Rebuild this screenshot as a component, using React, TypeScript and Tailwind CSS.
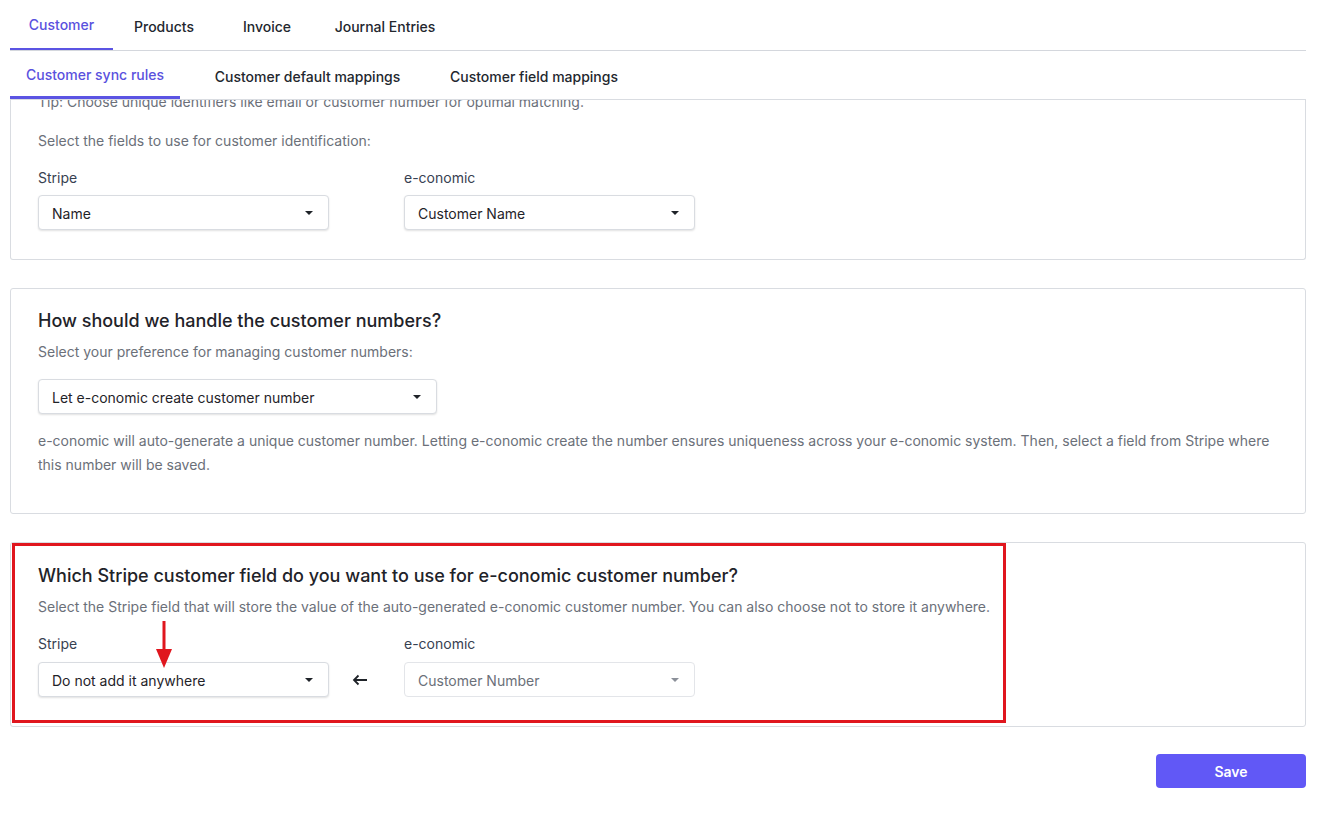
import React from "react";

const Caret = ({ light }: { light?: boolean }) => (
  <svg width="8" height="4" viewBox="0 0 8 4">
    <path d="M0 0h8L4 4z" fill={light ? "#8b9099" : "#1f2329"} />
  </svg>
);

function Select({ value, w, disabled }: { value: string; w: string; disabled?: boolean }) {
  return (
    <div
      className={
        "flex h-[35px] items-center justify-between rounded-[4px] border pl-[13px] pr-[15px] text-[14px] " +
        w +
        (disabled
          ? " border-[#e3e5e9] bg-white text-[#6b7079]"
          : " border-[#d9dce1] bg-white text-[#1f2329] shadow-[0_1px_2px_rgba(0,0,0,0.12)]")
      }
    >
      <span className="pt-[1px]">{value}</span>
      <Caret light={disabled} />
    </div>
  );
}

function LeftArrow() {
  return (
    <svg width="16" height="12" viewBox="0 0 16 12">
      <path d="M15 6H2M6.5 1.5L2 6l4.5 4.5" stroke="#1f2329" strokeWidth="1.8" fill="none" />
    </svg>
  );
}

export default function App() {
  return (
    <div className="min-h-screen w-full bg-white pl-[10px] pr-[24px] text-[#1f2329]" style={{ fontFamily: "Inter, 'Noto Sans', sans-serif" }}>
      {/* Top tabs */}
      <div className="flex h-[51px] border-b border-[#d4d7dd] text-[14px] font-medium">
        <div className="flex w-[103px] items-center justify-center pb-[2px] text-[#5a51de] shadow-[inset_0_-2px_0_#5b54e3]">Customer</div>
        <div className="flex w-[102px] items-center justify-center pt-[2px] text-[#23272e]">Products</div>
        <div className="flex w-[104px] items-center justify-center pt-[2px] text-[#23272e]">Invoice</div>
        <div className="flex w-[132px] items-center justify-center pt-[2px] text-[#23272e]">Journal Entries</div>
      </div>

      {/* Sub tabs */}
      <div className="flex h-[49px] border-b border-[#d9dce1] text-[14px] font-medium">
        <div className="flex w-[170px] items-center justify-center pb-[1px] text-[#5a51de] shadow-[inset_0_-3px_0_#5b54e3]">Customer sync rules</div>
        <div className="flex w-[255px] items-center justify-center pt-[2px] text-[#23272e]">Customer default mappings</div>
        <div className="flex w-[198px] items-center justify-center pt-[2px] text-[#23272e]">Customer field mappings</div>
      </div>

      {/* Scroll content */}
      <div className="overflow-hidden">
        {/* Card 1 (scrolled) */}
        <div className="rounded-b-[3px] border-x border-b border-[#d9dce1] px-[27px] pb-[29px]">
          <p className="mt-[-8px] text-[14px] leading-5 text-[#6b7079]">
            Tip: Choose unique identifiers like email or customer number for optimal matching.
          </p>
          <p className="mt-[19px] text-[14px] leading-5 text-[#6b7079]">Select the fields to use for customer identification:</p>
          <div className="mt-[17px] grid grid-cols-[291px_75px_291px]">
            <div className="text-[14px] leading-5 text-[#374151]">Stripe</div>
            <div />
            <div className="text-[14px] leading-5 text-[#374151]">e-conomic</div>
            <div className="mt-[7px]">
              <Select value="Name" w="w-[291px]" />
            </div>
            <div />
            <div className="mt-[7px]">
              <Select value="Customer Name" w="w-[291px]" />
            </div>
          </div>
        </div>

        {/* Card 2 */}
        <div className="mt-[28px] rounded-[3px] border border-[#d9dce1] px-[27px] pb-[36px] pt-[18px]">
          <h2 className="text-[18px] font-medium leading-7 text-[#1f2329]">How should we handle the customer numbers?</h2>
          <p className="mt-[7px] text-[14px] leading-5 text-[#6b7079]">Select your preference for managing customer numbers:</p>
          <div className="mt-[17px]">
            <Select value="Let e-conomic create customer number" w="w-[399px] h-[34px]" />
          </div>
          <p className="mt-[15px] text-[14px] leading-6 text-[#6b7079]">
            e-conomic will auto-generate a unique customer number. Letting e-conomic create the number ensures uniqueness across your e-conomic system. Then, select a field from Stripe where this number will be saved.
          </p>
        </div>

        {/* Card 3 */}
        <div className="relative mt-[28px] rounded-[3px] border border-[#d9dce1] px-[27px] pb-[29px] pt-[19px]">
          <h2 className="text-[18px] font-medium leading-7 text-[#1f2329]">Which Stripe customer field do you want to use for e-conomic customer number?</h2>
          <p className="mt-[7px] text-[14px] leading-5 text-[#6b7079]">
            Select the Stripe field that will store the value of the auto-generated e-conomic customer number. You can also choose not to store it anywhere.
          </p>
          <div className="mt-[17px] grid grid-cols-[291px_75px_291px]">
            <div className="text-[14px] leading-5 text-[#374151]">Stripe</div>
            <div />
            <div className="text-[14px] leading-5 text-[#374151]">e-conomic</div>
            <div className="mt-[8px]">
              <Select value="Do not add it anywhere" w="w-[291px] h-[34px]" />
            </div>
            <div className="mt-[8px] flex items-center pl-[23px]">
              <LeftArrow />
            </div>
            <div className="mt-[8px]">
              <Select value="Customer Number" w="w-[291px] h-[34px]" disabled />
            </div>
          </div>

          {/* Annotation: red box */}
          <div className="pointer-events-none absolute left-[1px] top-0 h-[180px] w-[994px] border-[3px] border-[#e0161e]" />
          {/* Annotation: red arrow */}
          <svg className="pointer-events-none absolute left-[144px] top-[78px]" width="18" height="48" viewBox="0 0 18 48">
            <rect x="7.5" y="0" width="3" height="30" fill="#e0161e" />
            <path d="M1 28h16L9 47z" fill="#e0161e" />
          </svg>
        </div>

        <div className="mt-[27px] flex justify-end pb-[30px]">
          <button className="h-[34px] w-[150px] rounded-[4px] bg-[#6158f6] text-[14px] font-semibold text-white">Save</button>
        </div>
      </div>
    </div>
  );
}
